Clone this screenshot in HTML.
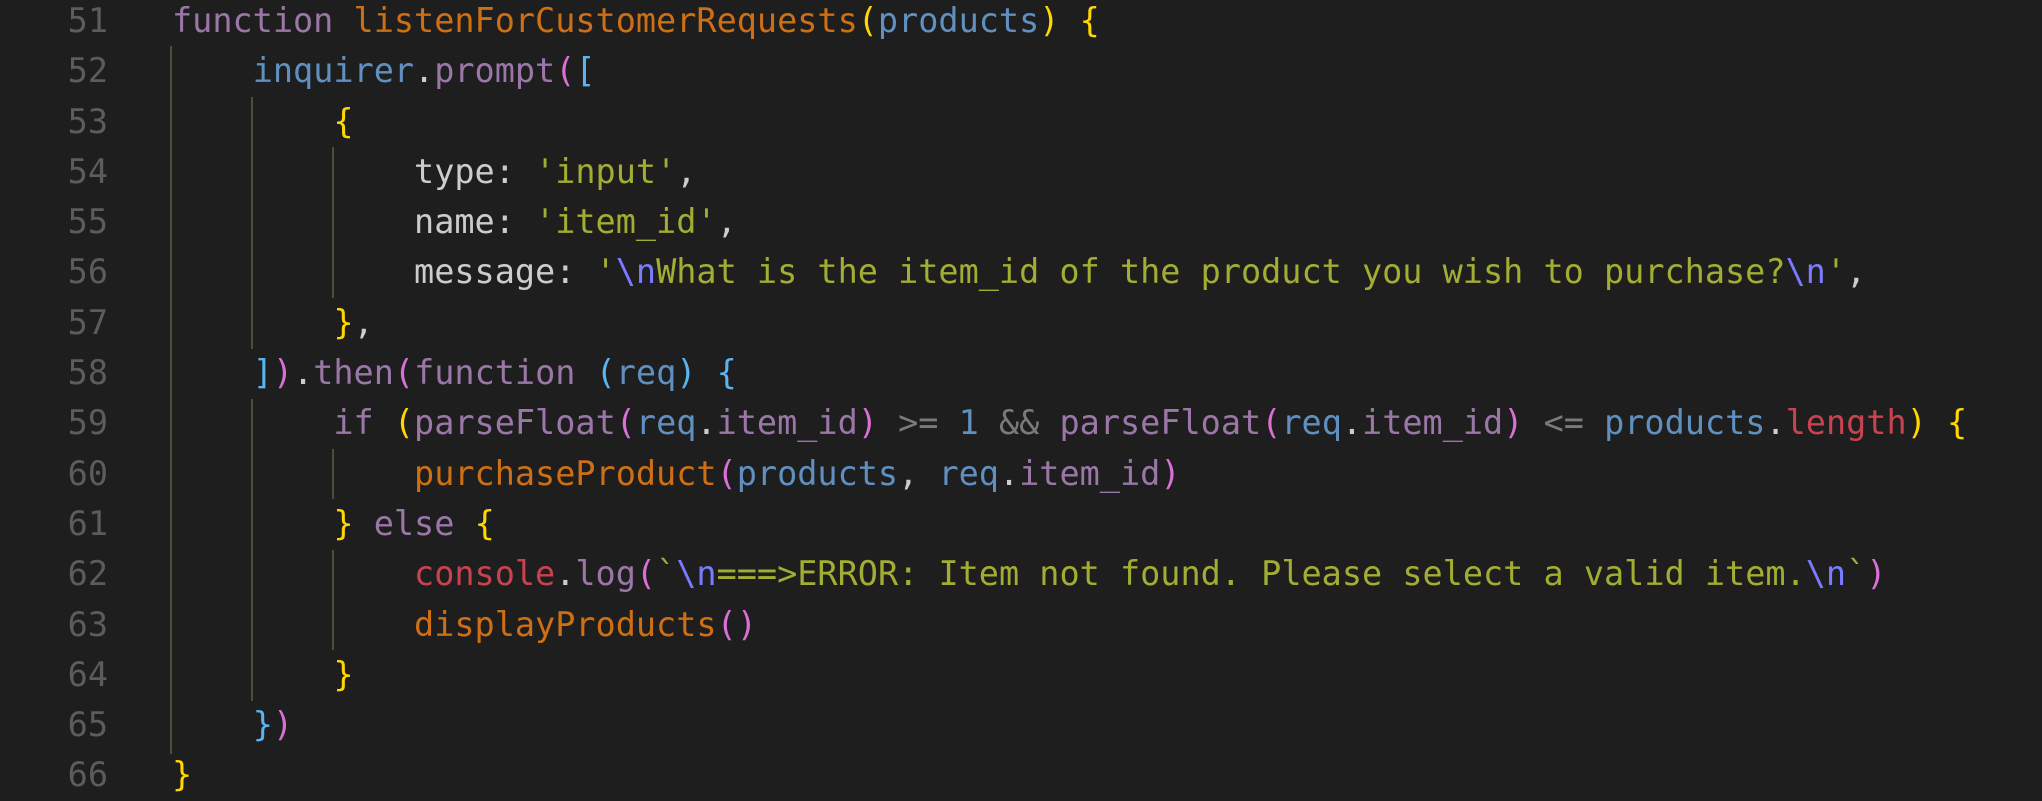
<!DOCTYPE html>
<html><head><style>
body{margin:0;width:2042px;height:796px;background:#1e1e1e;overflow:hidden;position:relative}
.n,.c{position:absolute;font-family:"DejaVu Sans Mono","Liberation Mono",monospace;font-size:33.5px;line-height:50.3px;white-space:pre;margin:0}
.n{left:0;width:108px;text-align:right;color:#5c5c5c;top:-4px}
.c{left:172px;top:-4px;color:#cccccc}
.g{position:absolute;width:2px;background:#4d4d38}
.p{color:#9b77a8}.o{color:#cd6f14}.b{color:#6090c0}.s{color:#a2ad33}.y{color:#ffd700}.k{color:#da70d6}.l{color:#5ab4f0}.e{color:#7b7bff}.r{color:#c8434f}.op{color:#7a7a7a}
</style></head><body>
<div class="g" style="left:170px;top:46px;height:708px"></div>
<div class="g" style="left:251px;top:97px;height:252px"></div>
<div class="g" style="left:251px;top:399px;height:302px"></div>
<div class="g" style="left:332px;top:147px;height:151px"></div>
<div class="g" style="left:332px;top:449px;height:50px"></div>
<div class="g" style="left:332px;top:550px;height:100px"></div>
<pre class="n">51
52
53
54
55
56
57
58
59
60
61
62
63
64
65
66</pre>
<pre class="c"><span class="p">function</span> <span class="o">listenForCustomerRequests</span><span class="y">(</span><span class="b">products</span><span class="y">)</span> <span class="y">{</span>
    <span class="b">inquirer</span>.<span class="p">prompt</span><span class="k">(</span><span class="l">[</span>
        <span class="y">{</span>
            type: <span class="s">'input'</span>,
            name: <span class="s">'item_id'</span>,
            message: <span class="s">'</span><span class="e">\n</span><span class="s">What is the item_id of the product you wish to purchase?</span><span class="e">\n</span><span class="s">'</span>,
        <span class="y">}</span>,
    <span class="l">]</span><span class="k">)</span>.<span class="p">then</span><span class="k">(</span><span class="p">function</span> <span class="l">(</span><span class="b">req</span><span class="l">)</span> <span class="l">{</span>
        <span class="p">if</span> <span class="y">(</span><span class="p">parseFloat</span><span class="k">(</span><span class="b">req</span>.<span class="p">item_id</span><span class="k">)</span> <span class="op">&gt;=</span> <span class="b">1</span> <span class="op">&amp;&amp;</span> <span class="p">parseFloat</span><span class="k">(</span><span class="b">req</span>.<span class="p">item_id</span><span class="k">)</span> <span class="op">&lt;=</span> <span class="b">products</span>.<span class="r">length</span><span class="y">)</span> <span class="y">{</span>
            <span class="o">purchaseProduct</span><span class="k">(</span><span class="b">products</span>, <span class="b">req</span>.<span class="p">item_id</span><span class="k">)</span>
        <span class="y">}</span> <span class="p">else</span> <span class="y">{</span>
            <span class="r">console</span>.<span class="p">log</span><span class="k">(</span><span class="s">`</span><span class="e">\n</span><span class="s">===&gt;ERROR: Item not found. Please select a valid item.</span><span class="e">\n</span><span class="s">`</span><span class="k">)</span>
            <span class="o">displayProducts</span><span class="k">()</span>
        <span class="y">}</span>
    <span class="l">}</span><span class="k">)</span>
<span class="y">}</span></pre>
</body></html>
